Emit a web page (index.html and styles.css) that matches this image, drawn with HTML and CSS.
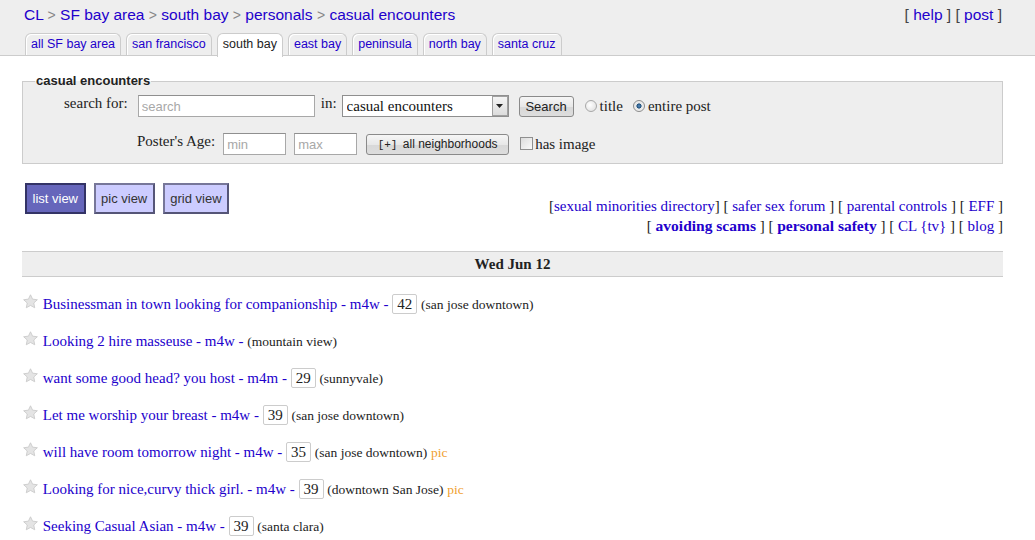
FILE: index.html
```html
<!DOCTYPE html>
<html lang="en">
<head>
<meta charset="utf-8">
<title>SF bay area south bay personals casual encounters - craigslist</title>
<link rel="stylesheet" href="styles.css">
</head>
<body>
<header class="top">
  <div class="topline">
    <div class="crumbs"><a href="#">CL</a> <span class="sep">&gt;</span> <a href="#">SF bay area</a> <span class="sep">&gt;</span> <a href="#">south bay</a> <span class="sep">&gt;</span> <a href="#">personals</a> <span class="sep">&gt;</span> <a href="#">casual encounters</a></div>
    <div class="toplinks">[ <a href="#">help</a> ] [ <a href="#">post</a> ]</div>
  </div>
  <nav class="tabs">
    <a class="tab" href="#">all SF bay area</a>
    <a class="tab" href="#">san francisco</a>
    <a class="tab active" href="#">south bay</a>
    <a class="tab" href="#">east bay</a>
    <a class="tab" href="#">peninsula</a>
    <a class="tab" href="#">north bay</a>
    <a class="tab" href="#">santa cruz</a>
  </nav>
</header>

<main class="content">
  <fieldset class="searchbox">
    <legend>casual encounters</legend>
    <div class="frow frow1">
      <label class="lbl">search for:</label>
      <input class="txt query" type="text" placeholder="search">
      <span class="lbl in">in:</span>
      <div class="selectwrap">
        <select class="sel"><option>casual encounters</option></select>
        <span class="arrow"><svg width="7" height="4" viewBox="0 0 7 4"><path d="M0 0h7L3.5 4z" fill="#222"/></svg></span>
      </div>
      <button class="btn search" type="button">Search</button>
      <label class="opt"><input class="radio" type="radio" name="srch">title</label>
      <label class="opt"><input class="radio" type="radio" name="srch" checked>entire post</label>
    </div>
    <div class="frow frow2">
      <label class="lbl age">Poster's Age:</label>
      <input class="txt small" type="text" placeholder="min">
      <input class="txt small" type="text" placeholder="max">
      <button class="btn hoods" type="button"><span class="plus">[+]</span> all neighborhoods</button>
      <label class="opt chk"><input class="check" type="checkbox">has image</label>
    </div>
  </fieldset>

  <div class="viewbar">
    <div class="views">
      <a class="view current" href="#">list view</a>
      <a class="view" href="#">pic view</a>
      <a class="view" href="#">grid view</a>
    </div>
    <div class="links">
      <div>[<a href="#">sexual minorities directory</a>] [ <a href="#">safer sex forum</a> ] [ <a href="#">parental controls</a> ] [ <a href="#">EFF</a> ]</div>
      <div>[ <a class="b" href="#">avoiding scams</a> ] [ <a class="b" href="#">personal safety</a> ] [ <a href="#">CL {tv}</a> ] [ <a href="#">blog</a> ]</div>
    </div>
  </div>

  <h4 class="date">Wed Jun 12</h4>

  <div class="rows">
    <p class="row"><span class="star"><svg width="15" height="15" viewBox="0 0 16 16"><path d="M8 .8l2.2 4.7 5.1.6-3.8 3.5 1 5.1L8 12.2l-4.5 2.5 1-5.1L.7 6.1l5.1-.6z" fill="#e4e4e4" stroke="#c8c8c8" stroke-width=".9"/></svg></span> <a href="#">Businessman in town looking for companionship - m4w -</a> <span class="agebox">42</span> <small class="loc">(san jose downtown)</small></p>
    <p class="row"><span class="star"><svg width="15" height="15" viewBox="0 0 16 16"><path d="M8 .8l2.2 4.7 5.1.6-3.8 3.5 1 5.1L8 12.2l-4.5 2.5 1-5.1L.7 6.1l5.1-.6z" fill="#e4e4e4" stroke="#c8c8c8" stroke-width=".9"/></svg></span> <a href="#">Looking 2 hire masseuse - m4w -</a> <small class="loc">(mountain view)</small></p>
    <p class="row"><span class="star"><svg width="15" height="15" viewBox="0 0 16 16"><path d="M8 .8l2.2 4.7 5.1.6-3.8 3.5 1 5.1L8 12.2l-4.5 2.5 1-5.1L.7 6.1l5.1-.6z" fill="#e4e4e4" stroke="#c8c8c8" stroke-width=".9"/></svg></span> <a href="#">want some good head? you host - m4m -</a> <span class="agebox">29</span> <small class="loc">(sunnyvale)</small></p>
    <p class="row"><span class="star"><svg width="15" height="15" viewBox="0 0 16 16"><path d="M8 .8l2.2 4.7 5.1.6-3.8 3.5 1 5.1L8 12.2l-4.5 2.5 1-5.1L.7 6.1l5.1-.6z" fill="#e4e4e4" stroke="#c8c8c8" stroke-width=".9"/></svg></span> <a href="#">Let me worship your breast - m4w -</a> <span class="agebox">39</span> <small class="loc">(san jose downtown)</small></p>
    <p class="row"><span class="star"><svg width="15" height="15" viewBox="0 0 16 16"><path d="M8 .8l2.2 4.7 5.1.6-3.8 3.5 1 5.1L8 12.2l-4.5 2.5 1-5.1L.7 6.1l5.1-.6z" fill="#e4e4e4" stroke="#c8c8c8" stroke-width=".9"/></svg></span> <a href="#">will have room tomorrow night - m4w -</a> <span class="agebox">35</span> <small class="loc">(san jose downtown)</small> <small class="pic">pic</small></p>
    <p class="row"><span class="star"><svg width="15" height="15" viewBox="0 0 16 16"><path d="M8 .8l2.2 4.7 5.1.6-3.8 3.5 1 5.1L8 12.2l-4.5 2.5 1-5.1L.7 6.1l5.1-.6z" fill="#e4e4e4" stroke="#c8c8c8" stroke-width=".9"/></svg></span> <a href="#">Looking for nice,curvy thick girl. - m4w -</a> <span class="agebox">39</span> <small class="loc">(downtown San Jose)</small> <small class="pic">pic</small></p>
    <p class="row"><span class="star"><svg width="15" height="15" viewBox="0 0 16 16"><path d="M8 .8l2.2 4.7 5.1.6-3.8 3.5 1 5.1L8 12.2l-4.5 2.5 1-5.1L.7 6.1l5.1-.6z" fill="#e4e4e4" stroke="#c8c8c8" stroke-width=".9"/></svg></span> <a href="#">Seeking Casual Asian - m4w -</a> <span class="agebox">39</span> <small class="loc">(santa clara)</small></p>
  </div>
</main>
</body>
</html>
```

FILE: styles.css
```css
html, body {
  margin: 0;
  padding: 0;
  background: #fff;
}
body {
  font-family: "Liberation Serif", "Times New Roman", serif;
  font-size: 15px;
  color: #222;
}
a {
  color: #2200cc;
  text-decoration: none;
}

/* ---------- header ---------- */
.top {
  background: #eeeeee;
  border-bottom: 1px solid #cccccc;
  padding: 4px 33px 0 24px;
  height: 51px;
  font-family: "Liberation Sans", Arial, sans-serif;
}
.topline {
  display: flex;
  justify-content: space-between;
  align-items: center;
  height: 22px;
  font-size: 15.5px;
  color: #333;
}
.crumbs .sep {
  color: #888;
  font-size: 14px;
}
.toplinks {
  color: #444;
}
.tabs {
  display: flex;
  gap: 5px;
  margin-top: 7px;
  padding-left: 1px;
}
.tab {
  display: block;
  height: 21px;
  line-height: 21px;
  padding: 0 5px;
  font-size: 12.5px;
  background: #eeeeee;
  border: 1px solid #cccccc;
  border-bottom: none;
  border-radius: 6px 6px 0 0;
  box-shadow: inset 1px 1px 0 #fff;
}
.tab.active {
  background: #ffffff;
  color: #222;
  height: 23px;
}

/* ---------- search box ---------- */
.content {
  margin: 0 32px 0 22px;
}
.searchbox {
  margin: 20px 0 0 0;
  padding: 9px 0 8px 0;
  background: #eeeeee;
  border: 1px solid #cccccc;
  min-width: 0;
}
.searchbox legend {
  font-family: "Liberation Sans", Arial, sans-serif;
  font-size: 13px;
  font-weight: bold;
  color: #222;
  padding: 0 1px;
  margin-left: 12px;
  line-height: 10px;
}
.frow {
  display: flex;
  align-items: center;
  height: 22px;
}
.frow1 {
  padding-left: 41px;
}
.frow2 {
  padding-left: 114px;
  margin-top: 16px;
}
.lbl {
  font-size: 15px;
  color: #222;
  margin-right: 10px;
  margin-bottom: 6px;
}
.lbl.in {
  margin: 0 5px 6px 6px;
}
.lbl.age {
  margin-right: 8px;
}
.txt {
  box-sizing: border-box;
  height: 22px;
  border: 1px solid #a8a8a8;
  border-top-color: #8f8f8f;
  background: #fff;
  font-family: "Liberation Sans", Arial, sans-serif;
  font-size: 13px;
  padding: 2px 3px;
  margin: 0;
  outline: none;
}
.txt::placeholder {
  color: #a8a8a8;
}
.query {
  width: 177px;
}
.small {
  width: 63px;
  margin-right: 8px;
}
.selectwrap {
  position: relative;
  width: 167px;
  height: 22px;
  margin-right: 10px;
}
.sel {
  appearance: none;
  -webkit-appearance: none;
  box-sizing: border-box;
  width: 167px;
  height: 22px;
  border: 1px solid #8f8f8f;
  background: #fff;
  font-family: "Liberation Serif", "Times New Roman", serif;
  font-size: 15px;
  color: #111;
  padding: 0 4px;
  margin: 0;
  border-radius: 0;
  outline: none;
}
.arrow {
  position: absolute;
  right: 1px;
  top: 1px;
  width: 16px;
  height: 20px;
  box-sizing: border-box;
  border: 1px solid #a0a0a0;
  background: linear-gradient(#f4f4f4, #dcdcdc);
  display: flex;
  align-items: center;
  justify-content: center;
}
.btn {
  box-sizing: border-box;
  height: 21px;
  border: 1px solid #8a8a8a;
  border-radius: 3px;
  background: linear-gradient(#f6f6f6 0%, #e8e8e8 50%, #d8d8d8 51%, #dddddd 100%);
  color: #222;
  font-family: "Liberation Sans", Arial, sans-serif;
  font-size: 13px;
  padding: 0 5px;
  margin: 0;
  cursor: pointer;
}
.btn.search {
  width: 55px;
  margin-right: 11px;
}
.btn.hoods {
  width: 143px;
  font-size: 12px;
  margin-left: 1px;
  margin-right: 11px;
}
.plus {
  font-family: "Liberation Mono", "Courier New", monospace;
  font-size: 11px;
  margin-right: 2px;
}
.opt {
  display: flex;
  align-items: center;
  font-size: 15px;
  color: #222;
  margin-right: 10px;
}
.radio {
  appearance: none;
  -webkit-appearance: none;
  width: 12px;
  height: 12px;
  margin: 0 3px 0 0;
  border-radius: 50%;
  border: 1px solid #a8a8a8;
  background: radial-gradient(circle at 40% 40%, #fff 0%, #e6e6e6 70%, #d0d0d0 100%);
  box-sizing: border-box;
}
.radio:checked {
  border-color: #8c8c8c;
  background: radial-gradient(circle at 50% 50%, #5d8fc0 0%, #1c4d7a 32%, #e6e6e6 40%, #f4f4f4 100%);
}
.check {
  appearance: none;
  -webkit-appearance: none;
  width: 13px;
  height: 13px;
  margin: 0 2px 2px 0;
  border: 1px solid #8f8f8f;
  background: linear-gradient(135deg, #dcdcdc, #fafafa);
  box-sizing: border-box;
}

/* ---------- view bar ---------- */
.viewbar {
  display: flex;
  justify-content: space-between;
  align-items: flex-start;
  margin-top: 19px;
}
.views {
  display: flex;
  gap: 8px;
  padding-left: 3px;
}
.view {
  display: block;
  box-sizing: border-box;
  height: 31px;
  line-height: 27px;
  padding: 0 5.5px;
  border: 2px solid #555577;
  border-top-color: #777799;
  border-left-color: #777799;
  background: #ccccff;
  color: #333;
  font-family: "Liberation Sans", Arial, sans-serif;
  font-size: 13px;
}
.view.current {
  background: #6666bb;
  border-color: #333366;
  color: #fff;
}
.links {
  text-align: right;
  margin-top: 13px;
  line-height: 20px;
  color: #222;
}
.links .b {
  font-weight: bold;
  font-size: 15.5px;
}

/* ---------- date header ---------- */
.date {
  margin: 15px 0 0 0;
  height: 24px;
  line-height: 24px;
  background: #eeeeee;
  border-top: 1px solid #cccccc;
  border-bottom: 1px solid #cccccc;
  text-align: center;
  font-size: 15px;
  font-weight: bold;
  color: #222;
}

/* ---------- rows ---------- */
.rows {
  margin-top: 9px;
}
.row {
  margin: 0;
  height: 37px;
  line-height: 37px;
  white-space: nowrap;
}
.star {
  display: inline-block;
  width: 15px;
  height: 15px;
  margin-left: 1px;
  margin-right: 1px;
}
.star svg {
  display: block;
}
.agebox {
  display: inline-block;
  box-sizing: border-box;
  height: 20px;
  line-height: 18px;
  padding: 0 4px;
  border: 1px solid #cccccc;
  border-radius: 2px;
  background: #fff;
  color: #222;
  font-size: 15px;
}
.loc {
  font-size: 13.5px;
  color: #222;
}
.pic {
  font-size: 13.5px;
  color: #f0a030;
}
```
